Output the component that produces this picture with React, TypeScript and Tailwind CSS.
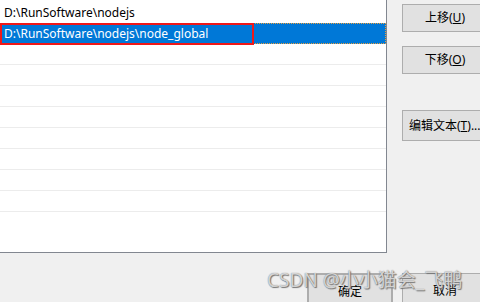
const paths = ['D:\\RunSoftware\\nodejs', 'D:\\RunSoftware\\nodejs\\node_global'];
const emptyRows = 8;

const Btn = ({ children, className = '' }: { children: React.ReactNode; className?: string }) => (
  <div
    className={`flex w-[86px] shrink-0 items-center justify-center border border-[#adadad] bg-[#e1e1e1] text-[12px] text-black ${className}`}
  >
    {children}
  </div>
);

export default function App() {
  return (
    <div className="relative h-[302px] w-[480px] overflow-hidden bg-[#f0f0f0] font-['Noto_Sans','Noto_Sans_CJK_SC',sans-serif] text-[12px]">
      <div className="flex">
        <div className="relative h-[253px] w-[387px] shrink-0 border-b border-r border-[#828790] bg-white pt-[2px]">
          <div className="flex h-[21px] items-center pl-[4px] text-black">{paths[0]}</div>
          <div className="flex h-[21px] items-center border border-dotted border-[#e8a040] bg-[#0078d7] pl-[3px] text-white">
            {paths[1]}
          </div>
          {Array.from({ length: emptyRows }).map((_, i) => (
            <div key={i} className="h-[21px] border-b border-[#ececec]" />
          ))}
          <div className="absolute left-0 top-[23px] h-[22px] w-[254px] border-2 border-[#f01818]" />
        </div>
        <div className="ml-[15px] flex shrink-0 flex-col pt-[4px]">
          <Btn className="h-[28px]">
            上移(<u>U</u>)
          </Btn>
          <Btn className="mt-[14px] h-[28px]">
            下移(<u>O</u>)
          </Btn>
          <Btn className="mt-[36px] h-[31px] justify-start pl-[6px]">
            编辑文本(<u>T</u>)...
          </Btn>
        </div>
      </div>
      <div className="mt-[20px] flex pl-[307px]">
        <Btn className="h-[32px] items-start border-2 border-[#0078d7] pt-[8px]">确定</Btn>
        <Btn className="ml-[9px] h-[32px] items-start pt-[8px]">取消</Btn>
      </div>
      <div className="absolute left-[267px] top-[266px] whitespace-nowrap text-[19px] text-white/70 [text-shadow:0_0_1px_#666,1px_1px_1px_#777]">
        CSDN @小小猫会_飞鸭
      </div>
    </div>
  );
}
